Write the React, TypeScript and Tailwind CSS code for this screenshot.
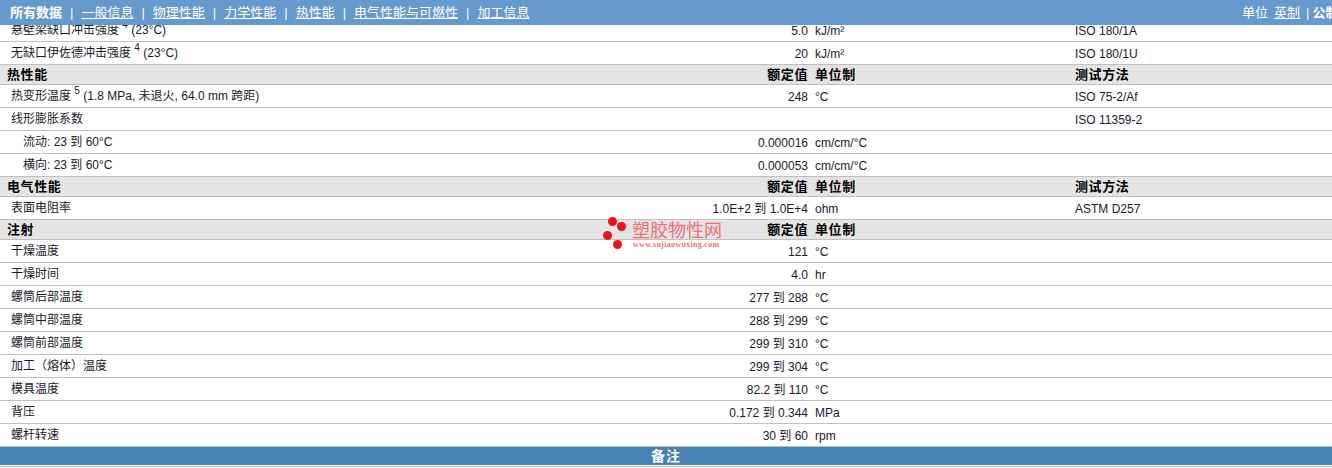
const font = "[font-family:'Liberation_Sans','Noto_Sans_CJK_SC',sans-serif]";

type R = { name: React.ReactNode; value?: string; unit?: string; method?: string; indent?: boolean };

function Row({ name, value, unit, method, indent }: R) {
  return (
    <div className="flex h-[23px] items-center border-b border-[#c0c0c0] bg-white text-[12px] text-[#1a1a2a]">
      <div className={`flex-1 whitespace-nowrap ${indent ? "pl-[23px]" : "pl-[11px]"}`}>{name}</div>
      <div className="w-[120px] whitespace-nowrap pt-[1px] text-right">{value}</div>
      <div className="w-[267px] pl-[7px] pt-[1px]">{unit}</div>
      <div className="w-[257px] pt-[1px]">{method}</div>
    </div>
  );
}

function Head({ title, method, h = "h-[20px]" }: { title: string; method?: string; h?: string }) {
  return (
    <div className={`flex ${h} items-center border-b border-[#c0c0c0] bg-[#e4e4e4] text-[13px] font-bold tracking-[0.6px] text-black`}>
      <div className="flex-1 pl-[7px]">{title}</div>
      <div className="w-[120px] text-right">额定值</div>
      <div className="w-[267px] pl-[7px]">单位制</div>
      <div className="w-[257px]">{method}</div>
    </div>
  );
}

const Sup = ({ n }: { n: string }) => <sup className="relative -top-[1px] align-super text-[10px] leading-none"> {n}</sup>;

export default function App() {
  return (
    <div className={`relative h-[468px] w-[1332px] overflow-hidden bg-white ${font}`}>
      <nav className="absolute inset-x-0 top-0 z-10 flex h-[25px] items-center justify-between whitespace-nowrap bg-[#6699cc] pl-[10px] text-[13px] text-white">
        <div className="flex items-center">
          <b>所有数据</b>
          <span className="px-[8px]">|</span><u>一般信息</u>
          <span className="px-[8px]">|</span><u>物理性能</u>
          <span className="px-[8px]">|</span><u>力学性能</u>
          <span className="px-[8px]">|</span><u>热性能</u>
          <span className="px-[8px]">|</span><u>电气性能与可燃性</u>
          <span className="px-[8px]">|</span><u>加工信息</u>
        </div>
        <div className="flex w-[90px] shrink-0 items-center overflow-hidden">
          <span>单位</span><u className="ml-[6px]">英制</u><span className="ml-[6px] mr-[3px]">|</span><b>公制</b>
        </div>
      </nav>

      <main className="pt-[19px]">
        <Row name={<>悬壁梁缺口冲击强度 <Sup n="4" /> (23°C)</>} value="5.0" unit="kJ/m²" method="ISO 180/1A" />
        <Row name={<>无缺口伊佐德冲击强度 <Sup n="4" /> (23°C)</>} value="20" unit="kJ/m²" method="ISO 180/1U" />
        <Head title="热性能" method="测试方法" />
        <Row name={<>热变形温度 <Sup n="5" /> (1.8 MPa, 未退火, 64.0 mm 跨距)</>} value="248" unit="°C" method="ISO 75-2/Af" />
        <Row name="线形膨胀系数" method="ISO 11359-2" />
        <Row indent name="流动: 23 到  60°C" value="0.000016" unit="cm/cm/°C" />
        <Row indent name="横向: 23 到  60°C" value="0.000053" unit="cm/cm/°C" />
        <Head title="电气性能" method="测试方法" />
        <Row name="表面电阻率" value="1.0E+2 到  1.0E+4" unit="ohm" method="ASTM D257" />
        <Head title="注射" />
        <Row name="干燥温度" value="121" unit="°C" />
        <Row name="干燥时间" value="4.0" unit="hr" />
        <Row name="螺筒后部温度" value="277 到  288" unit="°C" />
        <Row name="螺筒中部温度" value="288 到  299" unit="°C" />
        <Row name="螺筒前部温度" value="299 到  310" unit="°C" />
        <Row name="加工（熔体）温度" value="299 到  304" unit="°C" />
        <Row name="模具温度" value="82.2 到  110" unit="°C" />
        <Row name="背压" value="0.172 到  0.344" unit="MPa" />
        <Row name="螺杆转速" value="30 到  60" unit="rpm" />
        <div className="flex h-[18px] items-center justify-center border-b-0 bg-[#4682b4] text-[14px] font-bold leading-none tracking-[1px] text-white">备注</div>
        <div className="h-[1px] bg-[#c0c0c0] mt-[1px]" />
      </main>

      <div className="absolute left-[603px] top-[216px] h-[34px] w-[28px]" aria-hidden>
        <span className="absolute left-[5px] top-[1px] h-[9px] w-[9px] rounded-full bg-[#f01018]" />
        <span className="absolute left-[14px] top-[6px] h-[9px] w-[9px] rounded-full bg-[#f01018]" />
        <span className="absolute left-[0px] top-[15px] h-[9px] w-[9px] rounded-full bg-[#f01018]" />
        <span className="absolute left-[10px] top-[24px] h-[9px] w-[9px] rounded-full bg-[#f01018]" />
      </div>
      <div className="absolute left-[632px] top-[221px] whitespace-nowrap text-[18px] leading-[20px] text-[#ef6f78]">塑胶物性网</div>
      <div className="absolute left-[633px] top-[240px] whitespace-nowrap [font-family:'Liberation_Serif',serif] text-[8px] font-bold leading-[9px] tracking-[0.3px] text-[#ef6f78]">www.sujiaowuxing.com</div>
    </div>
  );
}
